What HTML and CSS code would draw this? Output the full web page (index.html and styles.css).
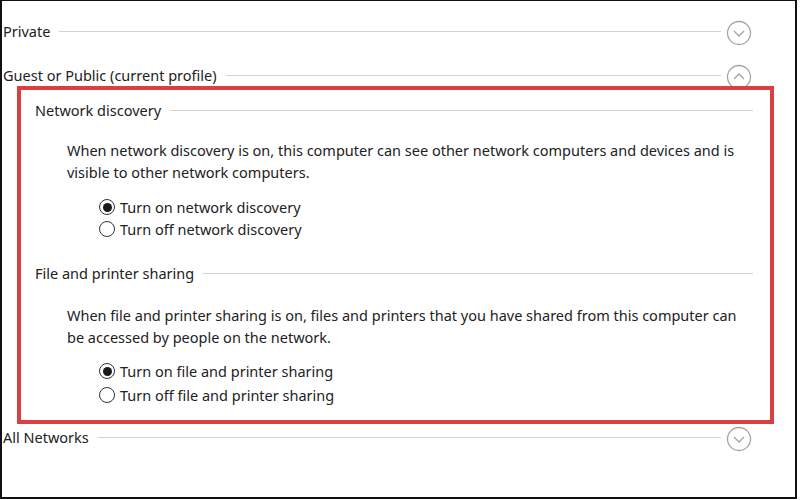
FILE: index.html
```html
<!DOCTYPE html>
<html>
<head>
<meta charset="utf-8">
<link rel="stylesheet" href="styles.css">
</head>
<body>
<div class="frame">
  <div class="hdr first">
    <span class="label">Private</span><span class="rule"></span>
    <svg class="chev" width="26" height="26" viewBox="0 0 26 26"><circle cx="13" cy="13" r="11.5"/><path d="M8 11 L13 16 L18 11"/></svg>
  </div>
  <div class="hdr second">
    <span class="label">Guest or Public (current profile)</span><span class="rule"></span>
    <svg class="chev" width="26" height="26" viewBox="0 0 26 26"><circle cx="13" cy="13" r="11.5"/><path d="M8 15 L13 10 L18 15"/></svg>
  </div>
  <div class="box">
    <div class="sub"><span class="label">Network discovery</span><span class="rule"></span></div>
    <p class="desc">When network discovery is on, this computer can see other network computers and devices and is<br>visible to other network computers.</p>
    <div class="radios">
      <div class="radio"><span class="dot on"></span>Turn on network discovery</div>
      <div class="radio"><span class="dot"></span>Turn off network discovery</div>
    </div>
    <div class="sub sub2"><span class="label">File and printer sharing</span><span class="rule"></span></div>
    <p class="desc desc2">When file and printer sharing is on, files and printers that you have shared from this computer can<br>be accessed by people on the network.</p>
    <div class="radios radios2">
      <div class="radio"><span class="dot on"></span>Turn on file and printer sharing</div>
      <div class="radio"><span class="dot"></span>Turn off file and printer sharing</div>
    </div>
  </div>
  <div class="hdr last">
    <span class="label">All Networks</span><span class="rule"></span>
    <svg class="chev" width="26" height="26" viewBox="0 0 26 26"><circle cx="13" cy="13" r="11.5"/><path d="M8 11 L13 16 L18 11"/></svg>
  </div>
</div>
</body>
</html>
```

FILE: styles.css
```css
html, body {
  margin: 0;
  padding: 0;
  background: #ffffff;
}
body {
  font-family: "Noto Sans", "Open Sans", sans-serif;
  font-size: 14.5px;
  color: #222222;
}
.frame {
  box-sizing: border-box;
  width: 797px;
  height: 499px;
  border: 2px solid #111111;
  border-top-width: 1px;
  background: #ffffff;
}
.hdr {
  display: flex;
  align-items: center;
  height: 26px;
  padding-left: 1px;
  padding-right: 43px;
}
.hdr.first { margin-top: 17px; }
.hdr.second { margin-top: 18px; }
.hdr.last { margin-top: 0; }
.label {
  white-space: nowrap;
}
.rule {
  flex: 1;
  height: 0;
  border-top: 1px solid #d2d2d2;
  margin-left: 9px;
}
.chev {
  flex: none;
  margin-left: 5px;
  margin-top: 4px;
}
.chev circle, .chev path {
  fill: none;
  stroke: #a4a4a4;
  stroke-width: 1.3;
}
.box {
  position: relative;
  margin: -2px 21px 0 15px;
  border: 4px solid #d9403f;
  padding: 10px 17px 13px 14px;
  background: transparent;
}
.sub {
  display: flex;
  align-items: center;
  height: 20px;
}
.sub2 { margin-top: 23px; }
.desc {
  margin: 19px 0 0 32px;
  line-height: 22px;
  white-space: nowrap;
}
.desc2 { margin-top: 21px; }
.radios {
  margin-top: 13px;
  padding-left: 64px;
}
.radio {
  display: flex;
  align-items: center;
  height: 22px;
}
.radios2 { margin-top: 11px; }
.radios2 .radio { height: 24px; }
.dot {
  box-sizing: border-box;
  width: 16px;
  height: 16px;
  border: 1px solid #333333;
  border-radius: 50%;
  margin-right: 5px;
  display: flex;
  align-items: center;
  justify-content: center;
}
.dot.on::after {
  content: "";
  width: 9px;
  height: 9px;
  border-radius: 50%;
  background: #1a1a1a;
}
```
